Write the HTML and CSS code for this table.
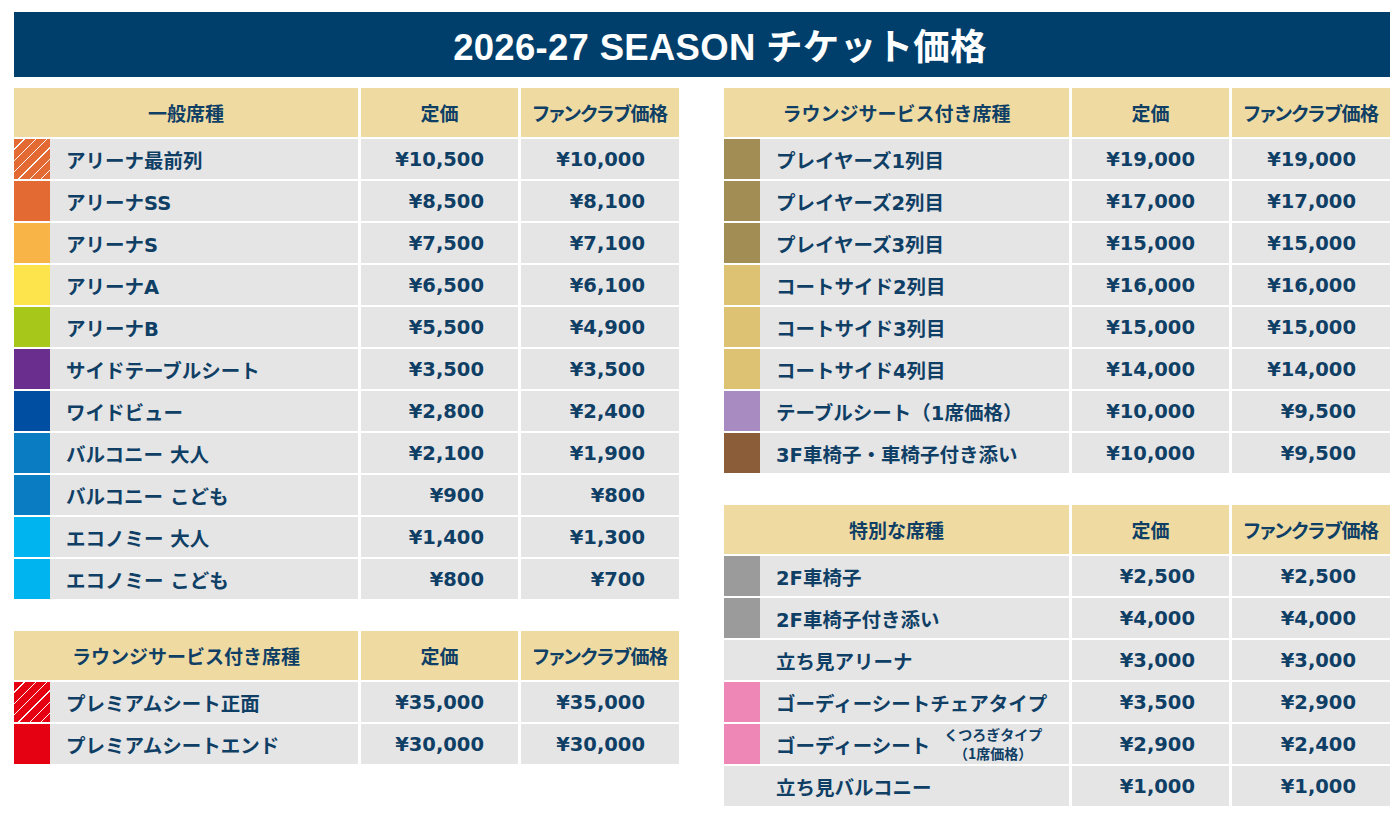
FILE: index.html
```html
<!DOCTYPE html>
<html lang="ja">
<head>
<meta charset="utf-8">
<title>2026-27 SEASON チケット価格</title>
<link rel="stylesheet" href="styles.css">
</head>
<body>
<div class="page">
  <h1 class="title">2026-27 SEASON チケット価格</h1>
  <div class="columns">
    <div class="col">
      <div class="tbl">
        <div class="hd">一般席種</div><div class="hd">定価</div><div class="hd fc">ファンクラブ価格</div>

        <div class="nm"><span class="sw s-orange-st"></span><span>アリーナ最前列</span></div><div class="pr">¥10,500</div><div class="pr">¥10,000</div>
        <div class="nm"><span class="sw s-orange"></span><span>アリーナSS</span></div><div class="pr">¥8,500</div><div class="pr">¥8,100</div>
        <div class="nm"><span class="sw s-amber"></span><span>アリーナS</span></div><div class="pr">¥7,500</div><div class="pr">¥7,100</div>
        <div class="nm"><span class="sw s-yellow"></span><span>アリーナA</span></div><div class="pr">¥6,500</div><div class="pr">¥6,100</div>
        <div class="nm"><span class="sw s-lime"></span><span>アリーナB</span></div><div class="pr">¥5,500</div><div class="pr">¥4,900</div>
        <div class="nm"><span class="sw s-purple"></span><span>サイドテーブルシート</span></div><div class="pr">¥3,500</div><div class="pr">¥3,500</div>
        <div class="nm"><span class="sw s-navy"></span><span>ワイドビュー</span></div><div class="pr">¥2,800</div><div class="pr">¥2,400</div>
        <div class="nm"><span class="sw s-blue"></span><span>バルコニー 大人</span></div><div class="pr">¥2,100</div><div class="pr">¥1,900</div>
        <div class="nm"><span class="sw s-blue"></span><span>バルコニー こども</span></div><div class="pr">¥900</div><div class="pr">¥800</div>
        <div class="nm"><span class="sw s-cyan"></span><span>エコノミー 大人</span></div><div class="pr">¥1,400</div><div class="pr">¥1,300</div>
        <div class="nm"><span class="sw s-cyan"></span><span>エコノミー こども</span></div><div class="pr">¥800</div><div class="pr">¥700</div>
      </div>

      <div class="tbl">
        <div class="hd">ラウンジサービス付き席種</div><div class="hd">定価</div><div class="hd fc">ファンクラブ価格</div>

        <div class="nm"><span class="sw s-red-st"></span><span>プレミアムシート正面</span></div><div class="pr">¥35,000</div><div class="pr">¥35,000</div>
        <div class="nm"><span class="sw s-red"></span><span>プレミアムシートエンド</span></div><div class="pr">¥30,000</div><div class="pr">¥30,000</div>
      </div>
    </div>

    <div class="col">
      <div class="tbl">
        <div class="hd">ラウンジサービス付き席種</div><div class="hd">定価</div><div class="hd fc">ファンクラブ価格</div>

        <div class="nm"><span class="sw s-olive"></span><span>プレイヤーズ1列目</span></div><div class="pr">¥19,000</div><div class="pr">¥19,000</div>
        <div class="nm"><span class="sw s-olive"></span><span>プレイヤーズ2列目</span></div><div class="pr">¥17,000</div><div class="pr">¥17,000</div>
        <div class="nm"><span class="sw s-olive"></span><span>プレイヤーズ3列目</span></div><div class="pr">¥15,000</div><div class="pr">¥15,000</div>
        <div class="nm"><span class="sw s-sand"></span><span>コートサイド2列目</span></div><div class="pr">¥16,000</div><div class="pr">¥16,000</div>
        <div class="nm"><span class="sw s-sand"></span><span>コートサイド3列目</span></div><div class="pr">¥15,000</div><div class="pr">¥15,000</div>
        <div class="nm"><span class="sw s-sand"></span><span>コートサイド4列目</span></div><div class="pr">¥14,000</div><div class="pr">¥14,000</div>
        <div class="nm"><span class="sw s-lilac"></span><span>テーブルシート（1席価格）</span></div><div class="pr">¥10,000</div><div class="pr">¥9,500</div>
        <div class="nm"><span class="sw s-brown"></span><span>3F車椅子・車椅子付き添い</span></div><div class="pr">¥10,000</div><div class="pr">¥9,500</div>
      </div>

      <div class="tbl">
        <div class="hd">特別な席種</div><div class="hd">定価</div><div class="hd fc">ファンクラブ価格</div>

        <div class="nm"><span class="sw s-grey"></span><span>2F車椅子</span></div><div class="pr">¥2,500</div><div class="pr">¥2,500</div>
        <div class="nm"><span class="sw s-grey"></span><span>2F車椅子付き添い</span></div><div class="pr">¥4,000</div><div class="pr">¥4,000</div>
        <div class="nm"><span class="sw"></span><span>立ち見アリーナ</span></div><div class="pr">¥3,000</div><div class="pr">¥3,000</div>
        <div class="nm"><span class="sw s-pink"></span><span>ゴーディーシートチェアタイプ</span></div><div class="pr">¥3,500</div><div class="pr">¥2,900</div>
        <div class="nm"><span class="sw s-pink"></span><span>ゴーディーシート</span><span class="note"><span class="note-line">くつろぎタイプ</span><span class="note-line">（1席価格）</span></span></div><div class="pr">¥2,900</div><div class="pr">¥2,400</div>
        <div class="nm"><span class="sw"></span><span>立ち見バルコニー</span></div><div class="pr">¥1,000</div><div class="pr">¥1,000</div>
      </div>
    </div>
  </div>
</div>
</body>
</html>
```
FILE: styles.css
```css
html, body {
  margin: 0;
  padding: 0;
  background: #ffffff;
}

body {
  font-family: "DejaVu Sans", "Noto Sans CJK JP", sans-serif;
  color: #103f66;
}

.page {
  width: 1376px;
  padding: 12px 10px 0 14px;
}

.title {
  margin: 0;
  height: 65px;
  padding-left: 36px;
  background: #003f6b;
  color: #ffffff;
  font-family: "Liberation Sans", "Noto Sans CJK JP", sans-serif;
  font-weight: 700;
  font-size: 36.5px;
  display: flex;
  align-items: center;
  justify-content: center;
  letter-spacing: 0.3px;
}

.columns {
  display: grid;
  grid-template-columns: 665px 666px;
  column-gap: 45px;
  margin-top: 11px;
}

.col {
  display: flex;
  flex-direction: column;
  gap: 32px;
}

.tbl {
  display: grid;
  grid-template-columns: 1fr 157px 158px;
  grid-auto-rows: 40px;
  grid-template-rows: 49px;
  column-gap: 3px;
  row-gap: 2px;
}

.hd {
  background: #efdba1;
  font-family: "Noto Sans CJK JP", sans-serif;
  font-weight: 700;
  font-size: 19px;
  display: flex;
  align-items: center;
  justify-content: center;
}

.hd.fc {
  font-feature-settings: "palt";
  letter-spacing: -0.6px;
}

.nm {
  background: #e5e5e5;
  display: flex;
  align-items: center;
  font-weight: 700;
  font-size: 19.5px;
}

.nm .sw {
  width: 36px;
  height: 100%;
  flex: none;
  margin-right: 16px;
}

.note {
  display: flex;
  flex-direction: column;
  align-items: center;
  margin-left: 14px;
  font-family: "Noto Sans CJK JP", sans-serif;
  font-size: 14px;
  line-height: 19.5px;
}

.note-line {
  display: block;
  height: 19.5px;
}

.pr {
  background: #e5e5e5;
  display: flex;
  align-items: center;
  justify-content: flex-end;
  padding-right: 34px;
  font-weight: 700;
  font-size: 19.5px;
}

.s-orange { background: #e36a33; }
.s-orange-st {
  background: repeating-linear-gradient(135deg, #e36a33 0 7px, rgba(255, 255, 255, 0.75) 7px 8px);
}
.s-amber { background: #f8b446; }
.s-yellow { background: #fde44c; }
.s-lime { background: #a7c71a; }
.s-purple { background: #6a2e8f; }
.s-navy { background: #004ea1; }
.s-blue { background: #0a7cc2; }
.s-cyan { background: #00b5ef; }
.s-red { background: #e50012; }
.s-red-st {
  background: repeating-linear-gradient(135deg, #e50012 0 7px, rgba(255, 255, 255, 0.75) 7px 8px);
}
.s-olive { background: #a28d55; }
.s-sand { background: #dcc272; }
.s-lilac { background: #a88bc1; }
.s-brown { background: #8b5e39; }
.s-grey { background: #9b9b9b; }
.s-pink { background: #ef87b6; }
```
